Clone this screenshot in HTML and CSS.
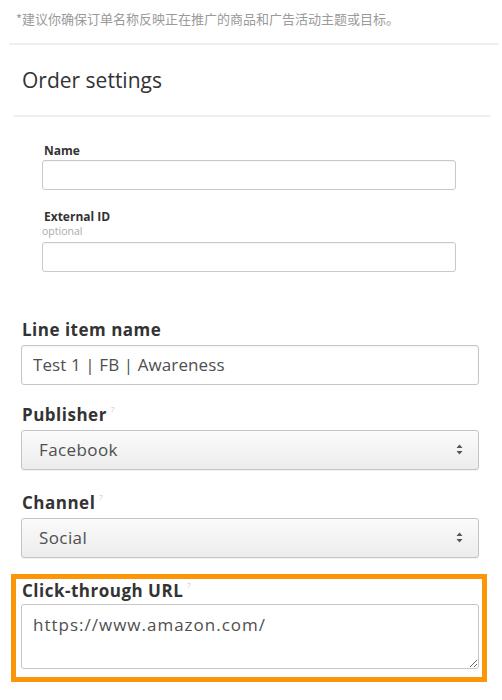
FILE: index.html
```html
<!DOCTYPE html>
<html lang="en">
<head>
<meta charset="utf-8">
<title>Order settings</title>
<link rel="stylesheet" href="styles.css">
</head>
<body>
<p class="note">*建议你确保订单名称反映正在推广的商品和广告活动主题或目标。</p>
<div class="rule rule-top"></div>
<h2 class="heading">Order settings</h2>
<div class="rule rule-mid"></div>

<section class="order-fields">
  <label class="small-label first">Name</label>
  <input class="small-input" type="text">
  <label class="small-label second">External ID</label>
  <div class="hint">optional</div>
  <input class="small-input hint-input" type="text">
</section>

<section class="line-fields">
  <label class="big-label first-big">Line item name</label>
  <input class="big-input" type="text" value="Test 1 | FB | Awareness">

  <label class="big-label">Publisher<sup class="q">?</sup></label>
  <div class="select">
    <span>Facebook</span>
    <svg class="arrows" width="7" height="11" viewBox="0 0 7 11"><path d="M3.5 0.5 L6.5 4 L0.5 4 Z M3.5 10.5 L6.5 7 L0.5 7 Z" fill="#555"/></svg>
  </div>

  <label class="big-label channel-label">Channel<sup class="q">?</sup></label>
  <div class="select">
    <span>Social</span>
    <svg class="arrows" width="7" height="11" viewBox="0 0 7 11"><path d="M3.5 0.5 L6.5 4 L0.5 4 Z M3.5 10.5 L6.5 7 L0.5 7 Z" fill="#555"/></svg>
  </div>
</section>

<section class="highlight">
  <label class="big-label url-label">Click-through URL<sup class="q">?</sup></label>
  <textarea class="url-area">https://www.amazon.com/</textarea>
</section>
</body>
</html>
```

FILE: styles.css
```css
html, body {
  margin: 0;
  padding: 0;
  background: #ffffff;
}
body {
  width: 502px;
  height: 700px;
  overflow: hidden;
  font-family: "Open Sans", "Noto Sans", "Noto Sans CJK SC", sans-serif;
  color: #333;
}
.note {
  margin: 0;
  padding: 10px 0 0 16px;
  font-family: "Noto Sans CJK SC", "Noto Sans", sans-serif;
  font-size: 13px;
  line-height: 17px;
  color: #9a9a9a;
}
.rule {
  height: 2px;
  background: #efefef;
}
.rule-top {
  margin: 16px 3px 0 9px;
}
.heading {
  margin: 20.5px 0 0 22px;
  font-size: 21px;
  line-height: 28px;
  font-weight: 400;
  color: #333;
}
.rule-mid {
  margin: 21.5px 12px 0 14px;
}
.order-fields {
  display: flex;
  flex-direction: column;
  align-items: flex-start;
  padding-left: 42px;
}
.small-label {
  font-size: 12px;
  line-height: 14px;
  font-weight: 700;
  color: #333;
  padding-left: 2px;
}
.small-label.first { margin-top: 26.6px; margin-bottom: 2.4px; }
.small-label.second { margin-top: 20.1px; }
.hint {
  font-size: 10.5px;
  line-height: 11px;
  color: #aaa;
  margin-top: 2px;
  margin-bottom: 4.9px;
}
.small-input {
  box-sizing: border-box;
  width: 414px;
  height: 30px;
  margin: 0;
  border: 1.5px solid #c9c9c9;
  border-radius: 3px;
  background: #fff;
  box-shadow: inset 0 1px 1px rgba(0,0,0,0.04);
}
.line-fields {
  display: flex;
  flex-direction: column;
  align-items: flex-start;
  padding-left: 21px;
}
.big-label {
  font-size: 17px;
  line-height: 20px;
  letter-spacing: 0.5px;
  font-weight: 700;
  color: #333;
  margin-top: 20.4px;
  margin-bottom: 4.6px;
  padding-left: 1px;
}
.big-label.first-big { margin-top: 48.4px; }
.big-label.channel-label { margin-top: 23.4px; }
.q {
  font-size: 8px;
  font-weight: 400;
  color: #c8c8c8;
  margin-left: 4px;
  vertical-align: 9px;
  line-height: 0;
}
.big-input {
  box-sizing: border-box;
  width: 458px;
  height: 40px;
  margin: 0;
  padding: 0 11px;
  border: 1.5px solid #c6c6c6;
  border-radius: 3px;
  font-family: "Open Sans", "Noto Sans", sans-serif;
  font-size: 17px;
  letter-spacing: 0.1px;
  color: #4f4f4f;
  background: #fff;
  box-shadow: inset 0 1px 2px rgba(0,0,0,0.05);
}
.select {
  box-sizing: border-box;
  width: 458px;
  height: 40px;
  display: flex;
  align-items: center;
  justify-content: space-between;
  padding: 0 15px 0 17px;
  border: 1.5px solid #c4c4c4;
  border-radius: 3px;
  background: linear-gradient(#fbfbfb, #ececec);
  box-shadow: 0 1px 0 rgba(0,0,0,0.05);
  font-size: 17px;
  letter-spacing: 0.4px;
  color: #4f4f4f;
}
.highlight {
  box-sizing: border-box;
  margin: 16px 0 0 11px;
  width: 476px;
  height: 108px;
  border: 5px solid #fa9608;
  padding: 2.4px 3px 0 5px;
  display: flex;
  flex-direction: column;
  align-items: flex-start;
}
.url-label {
  margin-top: 0;
  margin-bottom: 2.6px;
}
.url-area {
  box-sizing: border-box;
  width: 458px;
  height: 65px;
  margin: 0;
  padding: 9px 11px;
  border: 1.5px solid #c6c6c6;
  border-radius: 3px;
  font-family: "Open Sans", "Noto Sans", sans-serif;
  font-size: 17px;
  line-height: 22px;
  letter-spacing: 1px;
  color: #4f4f4f;
  background: #fff;
  resize: vertical;
}
```
